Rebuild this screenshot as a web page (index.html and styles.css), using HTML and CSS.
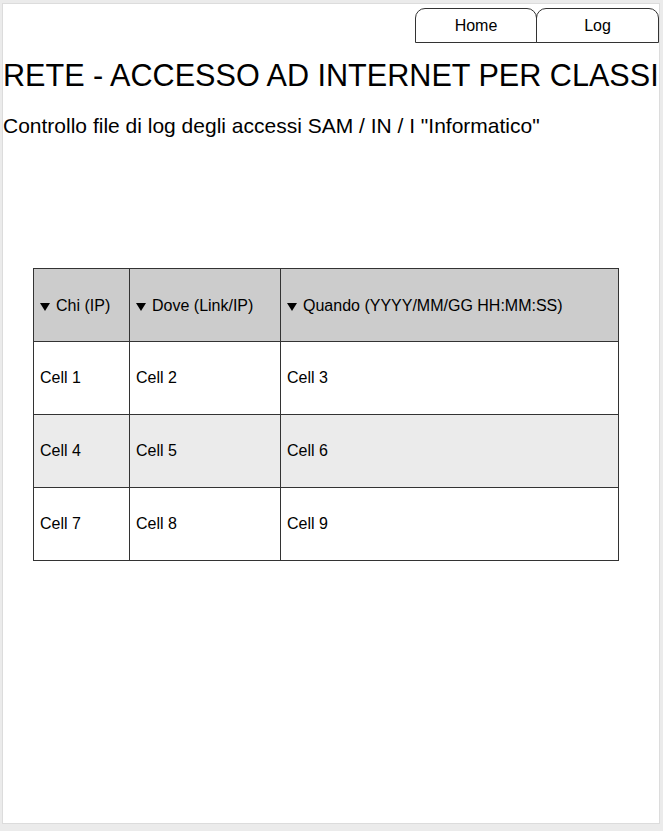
FILE: index.html
```html
<!DOCTYPE html>
<html lang="it">
<head>
<meta charset="utf-8">
<title>RETE - Accesso ad Internet per classi</title>
<link rel="stylesheet" href="styles.css">
</head>
<body>
<div class="panel">
  <nav class="tabs">
    <a class="tab" href="#">Home</a>
    <a class="tab" href="#">Log</a>
  </nav>
  <h1 class="title">RETE - ACCESSO AD INTERNET PER CLASSI</h1>
  <p class="subtitle">Controllo file di log degli accessi SAM / IN / I "Informatico"</p>
  <table class="log">
    <colgroup>
      <col class="c1"><col class="c2"><col class="c3">
    </colgroup>
    <thead>
      <tr>
        <th><span class="sort"></span>Chi (IP)</th>
        <th><span class="sort"></span>Dove (Link/IP)</th>
        <th><span class="sort"></span>Quando (YYYY/MM/GG HH:MM:SS)</th>
      </tr>
    </thead>
    <tbody>
      <tr><td>Cell 1</td><td>Cell 2</td><td>Cell 3</td></tr>
      <tr class="alt"><td>Cell 4</td><td>Cell 5</td><td>Cell 6</td></tr>
      <tr><td>Cell 7</td><td>Cell 8</td><td>Cell 9</td></tr>
    </tbody>
  </table>
</div>
</body>
</html>
```
FILE: styles.css
```css
html, body {
  margin: 0;
  padding: 0;
  background: #ebebeb;
  font-family: "Liberation Sans", Arial, sans-serif;
  color: #000;
}
.panel {
  box-sizing: border-box;
  margin: 3px 3px 0 2px;
  width: 658px;
  height: 821px;
  background: #fff;
  border: 1px solid #dcdcdc;
  display: flex;
  flex-direction: column;
}
.tabs {
  display: flex;
  justify-content: flex-end;
  margin-top: 4px;
}
.tab {
  box-sizing: border-box;
  width: 122px;
  height: 35px;
  border: 1px solid #333;
  border-radius: 10px 10px 0 0;
  display: flex;
  align-items: center;
  justify-content: center;
  font-size: 16px;
  color: #000;
  text-decoration: none;
  padding-top: 1px;
}
.tab + .tab {
  margin-left: -1px;
  width: 123px;
}
.title {
  margin: 15px 0 0 0;
  font-size: 30.6px;
  font-weight: normal;
  line-height: 34px;
  white-space: nowrap;
}
.subtitle {
  margin: 22px 0 0 0;
  font-size: 21px;
  line-height: 24px;
  white-space: nowrap;
}
.log {
  margin: 130px 0 0 30px;
  width: 586px;
  border-collapse: collapse;
  table-layout: fixed;
  font-size: 16px;
}
.c1 { width: 96px; }
.c2 { width: 151px; }
.c3 { width: 338px; }
.log th, .log td {
  border: 1px solid #333;
  height: 73px;
  padding: 0 6px;
  text-align: left;
  font-weight: normal;
  vertical-align: middle;
  box-sizing: border-box;
}
.log th {
  background: #cccccc;
  padding-top: 2px;
}
.sort {
  display: inline-block;
  width: 0;
  height: 0;
  border-left: 5px solid transparent;
  border-right: 5px solid transparent;
  border-top: 8px solid #000;
  margin-right: 6px;
  vertical-align: baseline;
}
.log tr.alt td {
  background: #ebebeb;
}
```
